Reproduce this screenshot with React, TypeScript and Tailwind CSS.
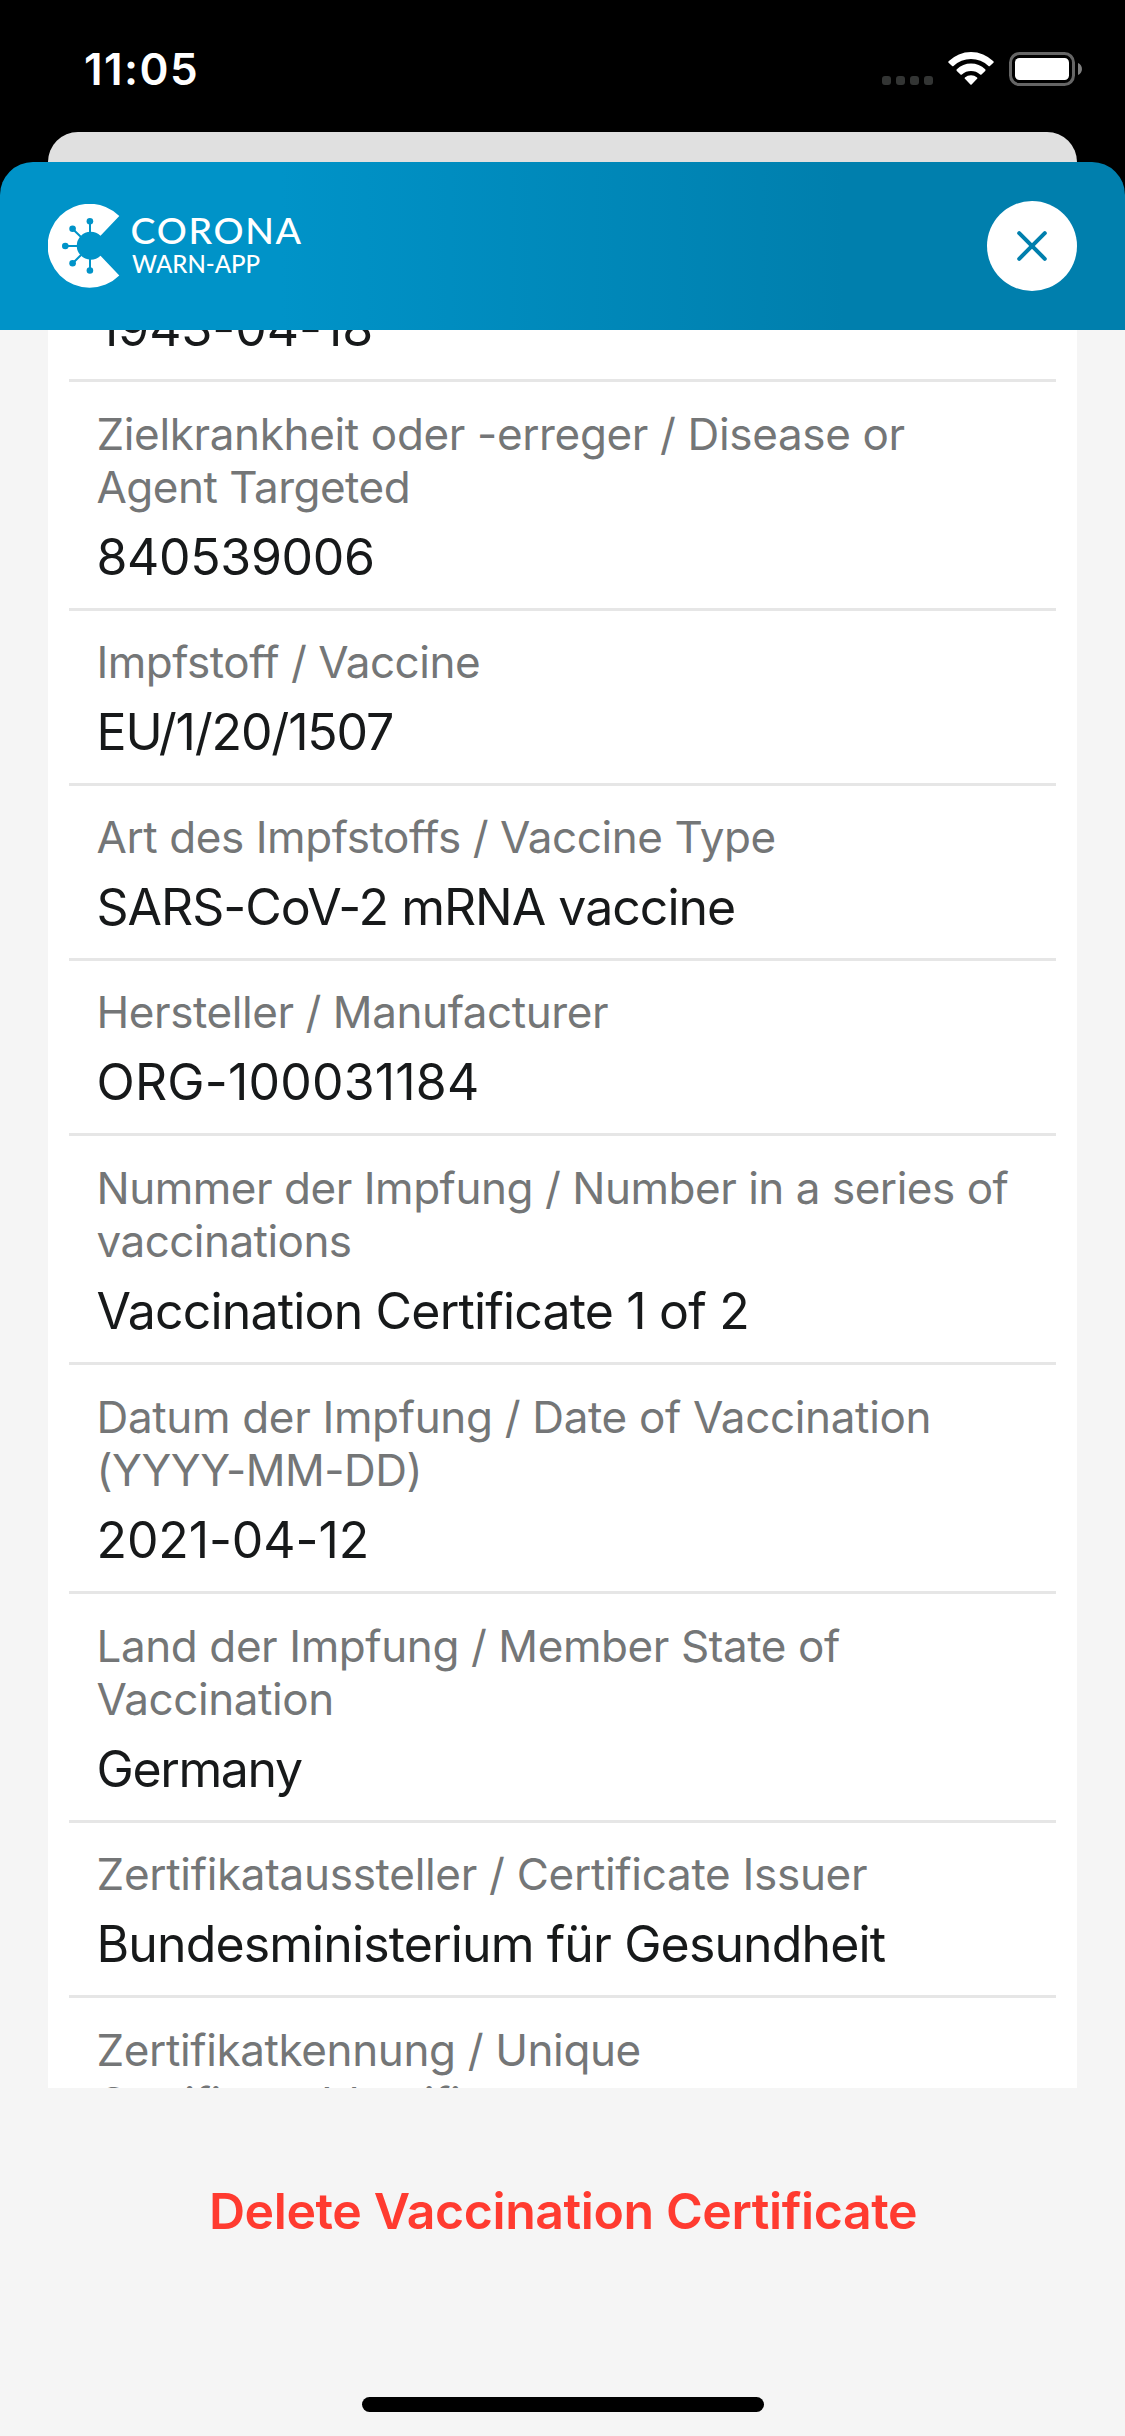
type Line = { text: string; spacing: string };
type Entry = { label: Line[]; value?: Line };

const entries: Entry[] = [
  {
    label: [
      { text: "Zielkrankheit oder -erreger / Disease or", spacing: "tracking-[-0.352px]" },
      { text: "Agent Targeted", spacing: "tracking-[-0.5px]" },
    ],
    value: { text: "840539006", spacing: "tracking-[-0.331px]" },
  },
  {
    label: [{ text: "Impfstoff / Vaccine", spacing: "tracking-[-0.5px]" }],
    value: { text: "EU/1/20/1507", spacing: "tracking-[-1.15px]" },
  },
  {
    label: [{ text: "Art des Impfstoffs / Vaccine Type", spacing: "tracking-[-0.42px]" }],
    value: { text: "SARS-CoV-2 mRNA vaccine", spacing: "tracking-[-1px]" },
  },
  {
    label: [{ text: "Hersteller / Manufacturer", spacing: "tracking-[-0.425px]" }],
    value: { text: "ORG-100031184", spacing: "tracking-[0.194px]" },
  },
  {
    label: [
      { text: "Nummer der Impfung / Number in a series of", spacing: "tracking-[-0.47px]" },
      { text: "vaccinations", spacing: "tracking-[-0.54px]" },
    ],
    value: { text: "Vaccination Certificate 1 of 2", spacing: "tracking-[-0.82px]" },
  },
  {
    label: [
      { text: "Datum der Impfung / Date of Vaccination", spacing: "tracking-[-0.34px]" },
      { text: "(YYYY-MM-DD)", spacing: "tracking-[-0.5px]" },
    ],
    value: { text: "2021-04-12", spacing: "tracking-[-0.1px]" },
  },
  {
    label: [
      { text: "Land der Impfung / Member State of", spacing: "tracking-[-0.41px]" },
      { text: "Vaccination", spacing: "tracking-[-0.42px]" },
    ],
    value: { text: "Germany", spacing: "tracking-[-1.374px]" },
  },
  {
    label: [{ text: "Zertifikataussteller / Certificate Issuer", spacing: "tracking-[-0.293px]" }],
    value: { text: "Bundesministerium für Gesundheit", spacing: "tracking-[-0.88px]" },
  },
  {
    label: [
      { text: "Zertifikatkennung / Unique", spacing: "tracking-[-0.38px]" },
      { text: "Certificate Identifier", spacing: "tracking-[-0.4px]" },
    ],
  },
];

function StatusIcons() {
  return (
    <div className="flex items-start">
      <div className="mt-6 flex gap-[5px]">
        {[0, 1, 2, 3].map((i) => (
          <span key={i} className="size-[9px] rounded-[3px] bg-[#333534]" />
        ))}
      </div>
      <svg className="ml-[15px]" width="46" height="34" viewBox="948 52 46 34" fill="#fff">
        <path d="M948.6 61.2 A32 32 0 0 1 993.4 61.2 Q994.1 62 993.4 62.8 L989.9 66 Q989.2 66.6 988.5 66 A25.3 25.3 0 0 0 953.5 66 Q952.8 66.6 952.1 66 L948.6 62.8 Q947.9 62 948.6 61.2 Z" />
        <path d="M956.8 69.3 A20.6 20.6 0 0 1 985.2 69.3 Q986 70.1 985.2 70.9 L981.5 74.4 Q980.8 75 980.1 74.4 A13.9 13.9 0 0 0 961.9 74.4 Q961.2 75 960.5 74.4 L956.8 70.9 Q956 70.1 956.8 69.3 Z" />
        <path d="M964.9 77.4 A9.6 9.6 0 0 1 977.1 77.4 Q977.8 78.1 977.1 78.8 L971.6 84.5 Q971 85.2 970.4 84.5 L964.9 78.8 Q964.2 78.1 964.9 77.4 Z" />
      </svg>
      <svg className="ml-[15px]" width="73" height="34" viewBox="0 0 73 34">
        <rect x="1.5" y="1.5" width="63" height="31" rx="9" fill="none" stroke="#666" strokeWidth="3" />
        <rect x="6" y="6" width="54" height="22" rx="4.5" fill="#fff" />
        <path d="M69 11 C74.3 13 74.3 21 69 23 Z" fill="#808080" />
      </svg>
    </div>
  );
}

function Logo() {
  return (
    <svg width="262" height="84" viewBox="48 204 262 84" fill="#fff" aria-label="Corona-Warn-App">
      <path d="M119.3 216 A42 42 0 1 0 119.3 275.5 L100.5 255.8 A14 14 0 1 1 100.5 235.7 Z" />
      <g stroke="#0093c8" strokeWidth="2" fill="#0093c8">
        <path d="M90 234 V221 M81 237 L72.7 229 M78 246 H65.3 M81 255 L72.7 263.2 M90 258 V270.5" />
        <g stroke="none">
          <circle cx="89.9" cy="221.3" r="3.3" />
          <circle cx="72.6" cy="228.7" r="3.3" />
          <circle cx="65.3" cy="246" r="3.3" />
          <circle cx="72.6" cy="263.3" r="3.3" />
          <circle cx="89.9" cy="270.5" r="3.3" />
        </g>
      </g>
      <text x="130.5" y="244.3" className="font-['Lato',sans-serif] text-[37.5px] font-medium tracking-[1.658px]">
        CORONA
      </text>
      <text x="132" y="273" className="font-['Lato',sans-serif] text-[24px] font-medium">
        WARN-APP
      </text>
    </svg>
  );
}

function Value({ line }: { line: Line }) {
  return (
    <div className={`text-[50px] leading-[61px] text-[#17191a] ${line.spacing}`}>{line.text}</div>
  );
}

function Row({ entry }: { entry: Entry }) {
  const twoLines = entry.label.length > 1;
  return (
    <div
      className={`flex shrink-0 flex-col border-b-[3px] border-[#e6e6e6] pl-[27.5px] ${
        twoLines ? "h-[229px] gap-[13px] pt-[26px]" : "h-[175px] gap-[12.5px] pt-[25px]"
      }`}
    >
      <div className="text-[44px] leading-[53px] text-[#747677]">
        {entry.label.map((l) => (
          <div key={l.text} className={l.spacing}>
            {l.text}
          </div>
        ))}
      </div>
      {entry.value && <Value line={entry.value} />}
    </div>
  );
}

export default function App() {
  return (
    <div className="flex h-[2436px] w-[1125px] flex-col overflow-hidden whitespace-nowrap bg-black font-['Inter',sans-serif]">
      <div className="flex h-[132px] shrink-0 items-start justify-between pl-[84px] pr-[43px] pt-[52px]">
        <div className="-mt-[9px] text-[44px] font-semibold leading-[52px] tracking-[1.434px] text-white">11:05</div>
        <StatusIcons />
      </div>

      <div className="mx-12 h-[30px] shrink-0 rounded-t-[31px] bg-[#e0e0e0]" />

      <header className="flex h-[168px] shrink-0 items-center justify-between rounded-t-[33px] bg-[linear-gradient(90deg,#0093c8_25%,#007fad_75%)] px-12">
        <Logo />
        <button className="flex size-[90px] items-center justify-center rounded-full bg-white">
          <svg width="30" height="30" viewBox="0 0 30 30" stroke="#007fad" strokeWidth="4" strokeLinecap="round">
            <path d="M2.2 2.2 L27.8 27.8 M27.8 2.2 L2.2 27.8" />
          </svg>
        </button>
      </header>

      <main className="flex h-[1758px] shrink-0 bg-[#f5f5f5] px-12">
        <div className="flex flex-1 flex-col overflow-hidden bg-white px-[21px]">
          <div className="flex h-[52px] shrink-0 flex-col justify-end border-b-[3px] border-[#e6e6e6] pb-[20px] pl-[29px]">
            <Value line={{ text: "1943-04-18", spacing: "tracking-[-0.05px]" }} />
          </div>
          {entries.map((e) => (
            <Row key={e.label[0].text} entry={e} />
          ))}
        </div>
      </main>

      <footer className="flex flex-1 flex-col items-center justify-between bg-[#f5f5f5] pb-6 pt-[93px]">
        <button className="pl-px text-[50px] font-semibold leading-[61px] tracking-[-0.418px] text-[#ff3b30]">
          Delete Vaccination Certificate
        </button>
        <div className="h-[15px] w-[402px] rounded-full bg-black" />
      </footer>
    </div>
  );
}
